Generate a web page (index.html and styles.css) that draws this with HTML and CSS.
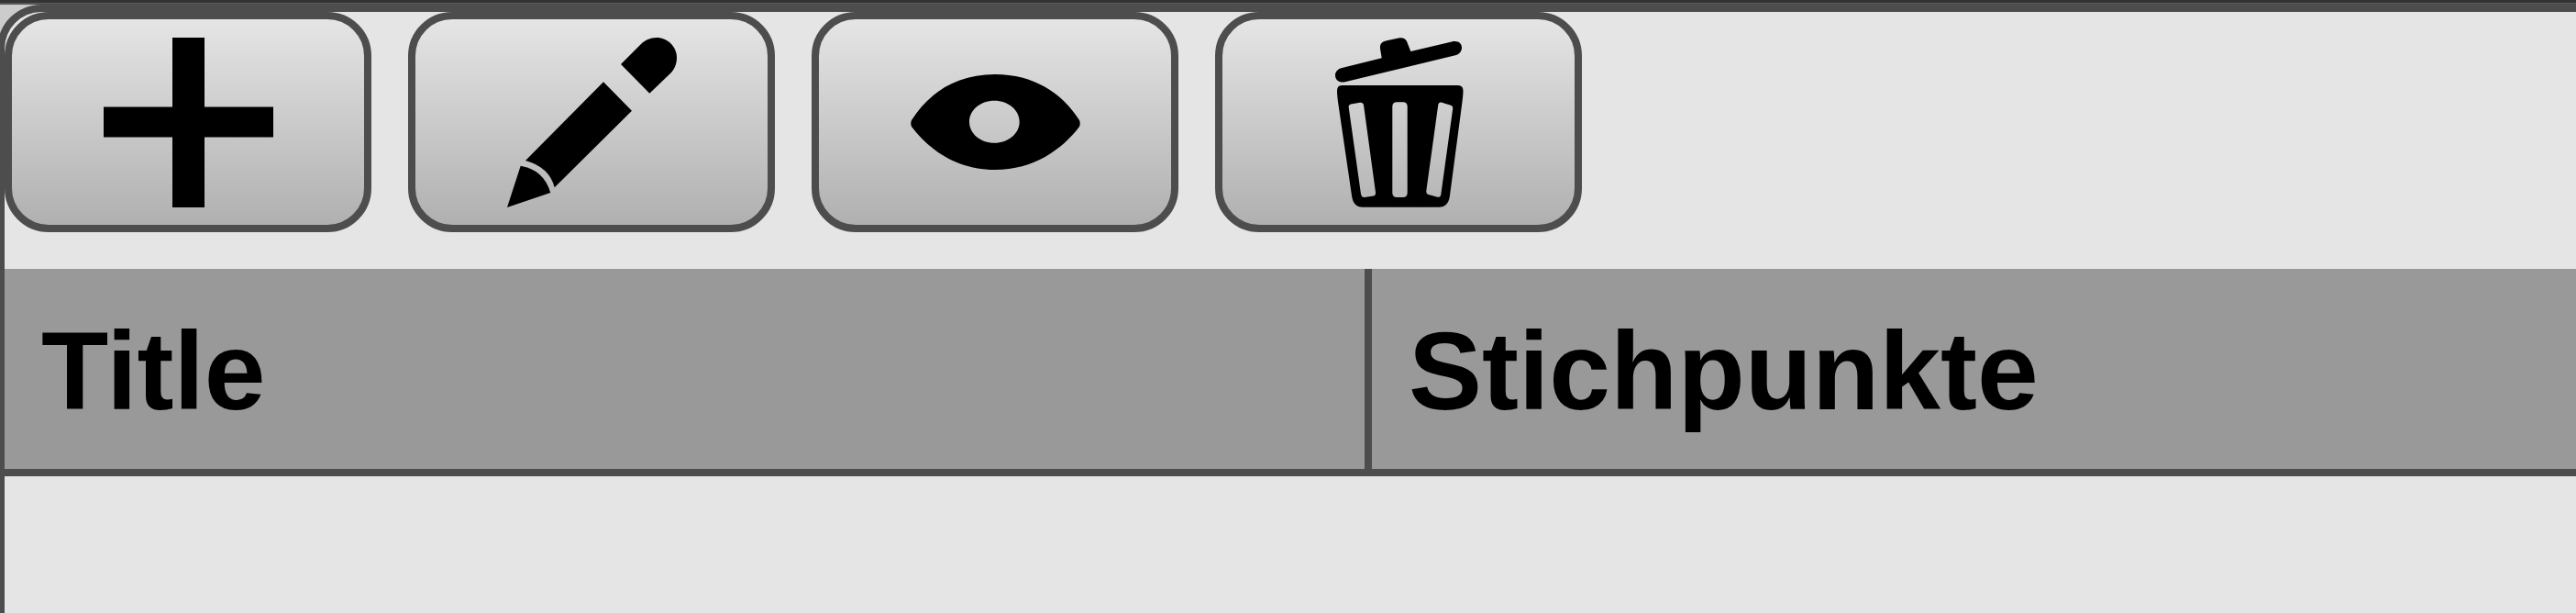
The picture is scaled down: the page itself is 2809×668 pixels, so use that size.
FILE: index.html
```html
<!DOCTYPE html>
<html lang="de">
<head>
  <meta charset="UTF-8" />
  <title>Stichpunkte</title>
  <link rel="stylesheet" href="styles.css">
</head>
<body>
  <div class="top-strip"></div>

  <div class="frame">
    <div class="toolbar">
      <button class="tool-btn" title="Neu">
        <svg class="icon" viewBox="0 0 185 185">
          <path d="M75 0h35v75.500h75v33h-75v76.500h-35v-76.500h-75v-33h75z" />
        </svg>
      </button>
      <button class="tool-btn" title="Bearbeiten">
        <svg class="icon" viewBox="0 0 185 185">
          <path d="M0 185L14.700 139.700Q40 144 47.300 169Z" />
          <path d="M20 134L105 48.300L136 79.700L51.700 163.300Q46 141 20 134Z" />
          <path d="M124 29L146 7C150 3 156 0 163 0C175 0 185 10 185 22C185 29 182 35 178 39L155.300 60.700Z" />
        </svg>
      </button>
      <button class="tool-btn" title="Ansehen">
        <svg class="icon" viewBox="0 0 185 185">
          <path fill-rule="evenodd" d="M1 90C20 60 50 40 92 40C134 40 165 60 184 90Q185.500 93.500 184 97C165 122 134 144 92 144C50 144 20 122 1 97Q-0.500 93.500 1 90ZM91.300 68.700C76 68.700 64 79 64 91.700C64 104.400 76 114.700 91.300 114.700C106.600 114.700 118.700 104.400 118.700 91.700C118.700 79 106.600 68.700 91.300 68.700Z" />
        </svg>
      </button>
      <button class="tool-btn" title="Löschen">
        <svg class="icon" viewBox="0 0 185 185">
          <path d="M30.300 33L73.700 22.300L72 12C71.500 7 74 4.500 78 3.500L92 0.500C97 -0.300 99.500 1 101 4L105.300 15L150 4.500C157 3 161 6 161 11C161 15 158 18 155 19L33.700 48.300C27 49.500 23 46 23 41C23 37 26 34 30.300 33Z" />
          <path fill-rule="evenodd" d="M30 52H157Q162.500 52 162.500 58Q162.500 62 161.500 70L148 172Q146.500 184.700 136 184.700H53Q42.500 184.700 41 172L26 70Q25 62 25 58Q25 52 30 52ZM40 72.500Q37.200 73.200 37.700 76L51 170.500Q51.800 174.300 55 174L65 172.500Q67.500 172 67 168.500L54 73.500Q53.300 70.300 50 70.700ZM90.300 70.300Q85.300 70.300 85.300 75.300V169Q85.300 174 90.300 174H96.700Q101.700 174 101.700 169V75.300Q101.700 70.300 96.700 70.300ZM138.500 70.500Q135.800 70 135.300 73L122.300 167Q122 170.500 124.500 171L134.500 173.800Q137.700 174.300 138.300 171L151.200 77.500Q151.600 74.500 149 73.700Z" />
        </svg>
      </button>
    </div>

    <div class="table-head">
      <div class="head-cell">Title</div>
      <div class="head-cell">Stichpunkte</div>
    </div>
  </div>
</body>
</html>
```

FILE: styles.css
```css
html, body {
  margin: 0;
  padding: 0;
  height: 100%;
  background: #cccccc;
  overflow: hidden;
  font-family: 'Liberation Sans', Arial, sans-serif;
}

.top-strip {
  height: 1px;
  background: #5c5c5c;
  border-top: 3px solid #333333;
  border-bottom: 1px solid #4d4d4d;
}

.frame {
  margin-left: -3px;
  height: 663px;
  box-sizing: border-box;
  background: #e5e5e5;
  border-top: 8px solid #4d4d4d;
  border-left: 8px solid #4d4d4d;
  border-top-left-radius: 48px;
}

.toolbar {
  display: flex;
  gap: 40px;
  margin-bottom: 40px;
}

.tool-btn {
  display: flex;
  align-items: center;
  justify-content: center;
  width: 400px;
  height: 240px;
  padding: 0;
  box-sizing: border-box;
  border: 8px solid #4d4d4d;
  border-radius: 48px;
  background: linear-gradient(to bottom, #e5e5e5, #b0b0b0);
  cursor: pointer;
}

.icon {
  display: block;
  width: 185px;
  height: 185px;
  fill: #000000;
  overflow: visible;
}

.table-head {
  display: grid;
  grid-template-columns: 1491px 1fr;
  background: #999999;
  border-bottom: 8px solid #4d4d4d;
}

.head-cell {
  height: 218px;
  box-sizing: border-box;
  padding: 42px 40px 0;
  font-size: 120px;
  font-weight: bold;
  color: #000000;
}

.head-cell:first-child {
  border-right: 8px solid #4d4d4d;
}
```
